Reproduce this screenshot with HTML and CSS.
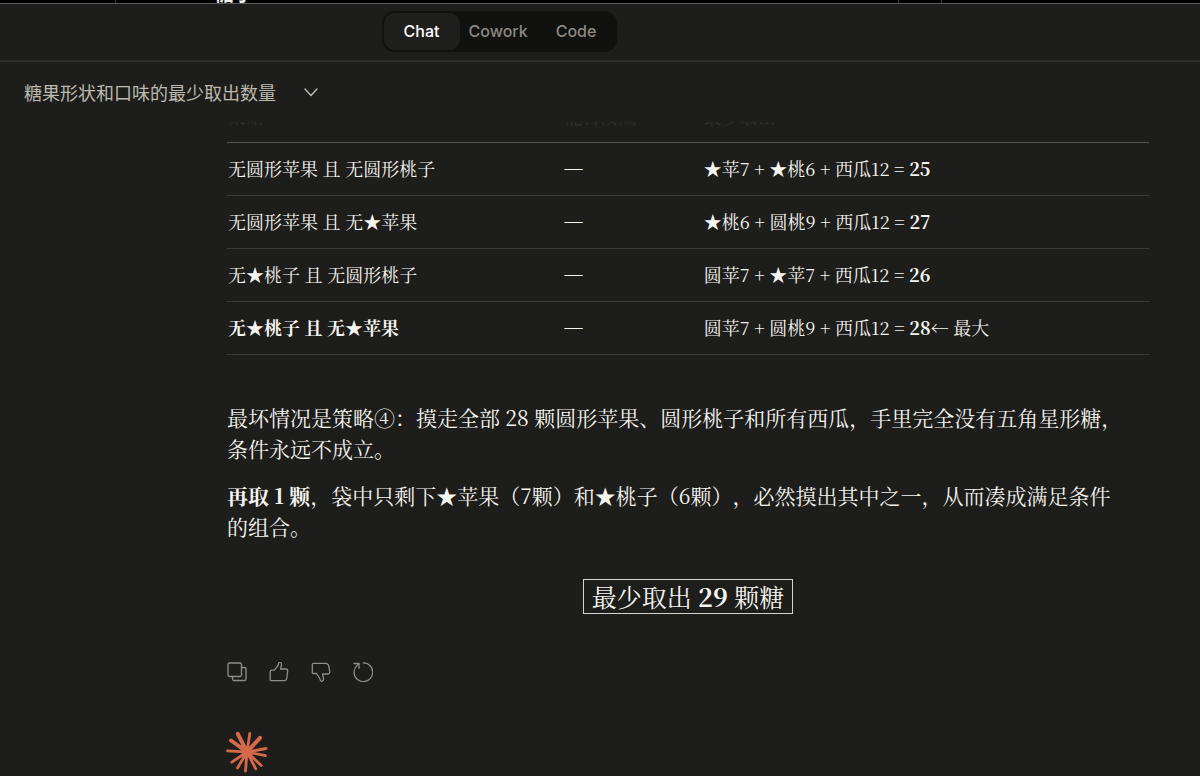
FILE: index.html
```html
<!DOCTYPE html>
<html lang="zh-CN">
<head>
<meta charset="utf-8">
<title>糖果形状和口味的最少取出数量</title>
<link rel="stylesheet" href="styles.css">
</head>
<body>
<div class="backdrop"><i class="tick tick-first"></i><b class="backdrop-text">糖小</b><i class="tick"></i><i class="tick"></i></div>
<header class="topbar">
  <nav class="tabs">
    <button class="tab tab-active" type="button">Chat</button>
    <button class="tab" type="button">Cowork</button>
    <button class="tab" type="button">Code</button>
  </nav>
</header>
<div class="titlebar">
  <button class="title" type="button">糖果形状和口味的最少取出数量
    <svg width="14" height="9" viewBox="0 0 14 9"><path d="M1 1l6 6.5L13 1"/></svg>
  </button>
</div>
<main class="content">
  <table class="cases">
    <colgroup><col class="col-case"><col class="col-mark"><col class="col-sum"></colgroup>
    <thead>
      <tr><th><div class="faded">策略</div></th><th><div class="faded">能否凑成</div></th><th><div class="faded">最多取出</div></th></tr>
    </thead>
    <tbody>
      <tr><td>无圆形苹果 且 无圆形桃子</td><td class="mark">—</td><td>★苹7 + ★桃6 + 西瓜12 = <b>25</b></td></tr>
      <tr><td>无圆形苹果 且 无★苹果</td><td class="mark">—</td><td>★桃6 + 圆桃9 + 西瓜12 = <b>27</b></td></tr>
      <tr><td>无★桃子 且 无圆形桃子</td><td class="mark">—</td><td>圆苹7 + ★苹7 + 西瓜12 = <b>26</b></td></tr>
      <tr><td><b>无★桃子 且 无★苹果</b></td><td class="mark">—</td><td>圆苹7 + 圆桃9 + 西瓜12 = <b>28</b>← 最大</td></tr>
    </tbody>
  </table>
  <div class="prose">
    <p>最坏情况是策略④：摸走全部 28 颗圆形苹果、圆形桃子和所有西瓜，手里完全没有五角星形糖，条件永远不成立。</p>
    <p><b>再取 1 颗</b>，袋中只剩下★苹果（7颗）和★桃子（6颗），必然摸出其中之一，从而凑成满足条件的组合。</p>
  </div>
  <div class="answer"><span class="answer-box">最少取出 <b>29</b> 颗糖</span></div>
  <div class="actions">
    <button class="action" type="button" aria-label="复制"><svg viewBox="0 0 20 20"><rect x="1" y="1" width="13.5" height="13.5" rx="1.5"/><path d="M14.5 5.500H17.500a1.500 1.500 0 0 1 1.500 1.500V17a1.500 1.500 0 0 1-1.500 1.500H7A1.500 1.500 0 0 1 5.500 17V14.500"/></svg></button>
    <button class="action" type="button" aria-label="赞"><svg viewBox="0 0 20 20"><path d="M1.200 9.800q0-1.600 1.600-1.600H5.500L9 3.500 9.700 1.200Q10.200 0 11.400.5q1.400.6 1.100 2.300L11.400 7H16.800q2 0 1.900 2l-1 7.500q-.4 2.200-2.500 2.200H2.500q-1.300 0-1.300-1.300Z"/></svg></button>
    <button class="action" type="button" aria-label="踩"><svg viewBox="0 0 20 20"><path d="M1.300 2.500q0-1.200 1.200-1.200H14.500q2.500 0 3.100 2.200l1.100 5.500q.4 3-2 3H11.500l1 4.500q.3 2-1.300 2.700-1.300.4-1.800-.9L8.500 16 5.500 11.500H2.500q-1.200 0-1.200-1.200Z"/></svg></button>
    <button class="action" type="button" aria-label="重试"><svg viewBox="0 0 20 20"><path d="M1 1.500H6V6.300M6 1.500Q5.300 2.500 3.800 3.600A9.300 9.300 0 1 0 10.300.9"/></svg></button>
  </div>
  <svg class="spark" viewBox="0 0 42 42"><g><path d="M21 21L11.800 2.800M21 21L34 6.800M21 21L5 9.500"/><path d="M21 21L23.800 2.500M21 21L40 17.500M21 21L1.500 19.800M21 21L39.500 24.700M21 21L5.800 31.200M21 21L35.200 34.500M21 21L11.500 37M21 21L19.500 40M21 21L29.800 37.800"/></g><circle cx="21" cy="21" r="4"/></svg>
</main>
</body>
</html>
```
FILE: styles.css
```css
* { box-sizing: border-box; }
body {
  margin: 0;
  background: #1d1d1b;
  color: #f5f4ee;
  font-family: "Noto Serif CJK SC", "Liberation Serif", "Noto Sans CJK SC", serif;
  font-size: 21px;
  line-height: 31px;
  text-spacing-trim: space-all;
}
button {
  margin: 0;
  border: 0;
  background: none;
  font: inherit;
  color: inherit;
  padding: 0;
}
svg { fill: none; stroke: currentColor; stroke-linecap: round; stroke-linejoin: round; }
.backdrop {
  height: 4px;
  overflow: hidden;
  display: flex;
  align-items: flex-end;
  background: #000;
  border-bottom: 1px solid #5a5a58;
}
.backdrop-text {
  font-family: "Noto Sans CJK SC", sans-serif;
  font-size: 20px;
  line-height: 20px;
  margin: 0 644px 0 98px;
}
.tick { width: 1px; height: 3px; background: #333; margin-right: 42px; }
.tick-first { margin: 0 0 0 115px; }
.topbar {
  height: 58px;
  display: flex;
  justify-content: center;
  align-items: center;
  padding: 0 201px 2px 0;
  border-bottom: 2px solid #2e2e2c;
}
.tabs {
  display: flex;
  padding: 2px;
  border-radius: 13px;
  background: #111110;
  font: 500 16px/24px Inter, "Liberation Sans", sans-serif;
}
.tab { height: 37px; padding: 0 14px; color: #8b8982; }
.tab:nth-child(2) { padding-left: 9px; }
.tab:last-child { padding-right: 19px; }
.tab-active { padding: 0 20px; border-radius: 11px; background: #1f1f1d; color: #fff; }
.titlebar { height: 60px; padding: 15px 24px; }
.title {
  display: flex;
  align-items: center;
  gap: 28px;
  font: 18px/30px "Noto Sans CJK SC", sans-serif;
  color: #bcb9ae;
}
.title svg { stroke-width: 1.4; }
.content { padding: 0 51px 0 227px; }
.cases {
  width: 100%;
  table-layout: fixed;
  border-collapse: collapse;
  font-size: 18px;
  line-height: 26px;
}
.col-case { width: 36.5%; }
.col-mark { width: 15.1%; }
.cases th { padding: 0 0 16px 1px; text-align: left; }
.cases td { padding: 12px 0 14px 1px; }
.cases .mark { font-family: "Liberation Serif", serif; }
.cases tr { border-bottom: 1px solid #3a3a38; }
.cases thead tr { border-bottom-color: #555553; }
.faded {
  height: 4px;
  overflow: hidden;
  display: flex;
  align-items: flex-end;
  line-height: 20px;
  color: #2a2a28;
}
.prose { padding: 47px 24px 0 0; }
.prose p { margin: 0 0 16px; }
.answer { padding-top: 21px; display: flex; justify-content: center; }
.answer-box { border: 1px solid #d5d4ce; padding: 0 8px; font-size: 25px; line-height: 33px; }
.actions { display: flex; gap: 22px; padding-top: 48px; color: #8f8d86; }
.action { width: 20px; height: 20px; }
.action svg { display: block; width: 20px; height: 20px; stroke-width: 1.3; }
.spark { display: block; width: 42px; height: 42px; margin-top: 49px; margin-left: -1px; color: #d6694a; stroke-width: 2.8; }
.spark path:first-child { stroke-width: 4; }
.spark circle { fill: currentColor; }
```
